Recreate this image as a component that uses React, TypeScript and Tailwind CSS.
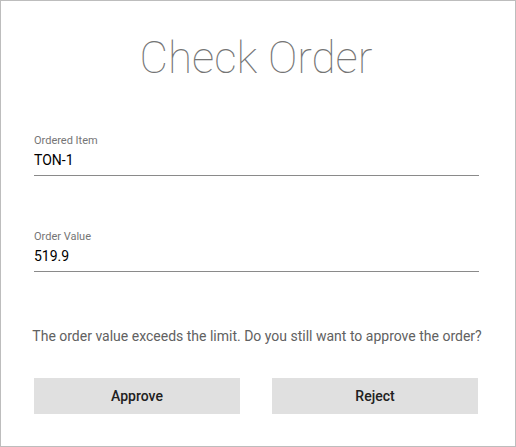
import React from "react";

function Field({ label, value }: { label: string; value: string }) {
  return (
    <div className="flex flex-col">
      <label className="text-[11px] leading-[13px] text-[#757575]">{label}</label>
      <div className="mt-[5px] pb-[6px] text-[14px] leading-[17px] text-black border-b border-[#8a8a8a]">
        {value}
      </div>
    </div>
  );
}

export default function App() {
  return (
    <div
      className="w-[516px] h-[447px] bg-white border border-[#bdbdbd] flex flex-col"
      style={{ fontFamily: "Roboto, 'Liberation Sans', sans-serif" }}
    >
      <h1 className="mt-[31px] pr-[4px] text-center text-[44px] leading-[52px] font-thin text-[#757575]">
        Check Order
      </h1>
      <div className="mt-[50px] pl-[33px] pr-[36px] flex flex-col gap-[54px]">
        <Field label="Ordered Item" value="TON-1" />
        <Field label="Order Value" value="519.9" />
      </div>
      <p className="mt-[56px] pr-[2px] text-center text-[14px] leading-[17px] text-[#616161]">
        The order value exceeds the limit. Do you still want to approve the order?
      </p>
      <div className="mt-[33px] pl-[33px] pr-[37px] grid grid-cols-2 gap-[32px]">
        <button className="h-[36px] bg-[#e0e0e0] text-[14px] font-medium text-[#212121]">Approve</button>
        <button className="h-[36px] bg-[#e0e0e0] text-[14px] font-medium text-[#212121]">Reject</button>
      </div>
    </div>
  );
}
